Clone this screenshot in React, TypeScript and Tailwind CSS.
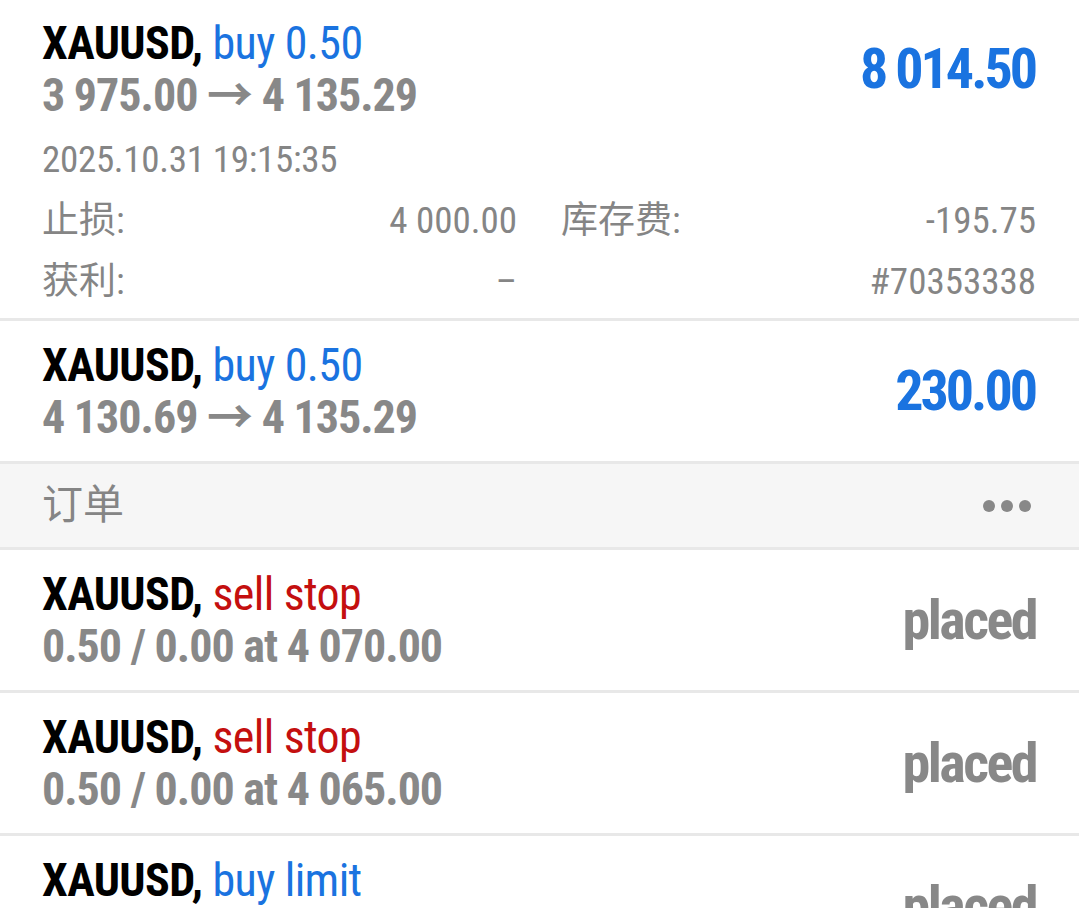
const FONT = "font-['Roboto_Condensed',Roboto,'Noto_Sans_CJK_SC',sans-serif] [font-stretch:condensed]"

type Side = 'buy' | 'sell'

function Title({ type, side }: { type: string; side: Side }) {
  return (
    <div className="text-[46px] leading-[52px] tracking-[-0.6px] whitespace-nowrap">
      <span className="font-bold text-black">XAUUSD,</span>{' '}
      <span className={side === 'buy' ? 'text-[#1a73e0]' : 'text-[#c40f0f]'}>{type}</span>
    </div>
  )
}

function SubLine({ children }: { children: React.ReactNode }) {
  return (
    <div className="text-[46px] font-bold leading-[52px] tracking-[-1px] text-[#888888] whitespace-nowrap">
      {children}
    </div>
  )
}

function Position({ open, close, profit }: { open: string; close: string; profit: string }) {
  return (
    <div className="flex h-[143px] items-center justify-between border-b-[3px] border-[#e8e8e8] pl-[42px] pr-[43px]">
      <div>
        <Title type="buy 0.50" side="buy" />
        <SubLine>
          {open} → {close}
        </SubLine>
      </div>
      <div className="mr-[1px] text-[56px] font-bold tracking-[-3px] text-[#1a73e0]">{profit}</div>
    </div>
  )
}

function Order({ type, side, line }: { type: string; side: Side; line: string }) {
  return (
    <div className="flex h-[143px] items-center justify-between border-b-[3px] border-[#e8e8e8] pl-[42px] pr-[43px]">
      <div>
        <Title type={type} side={side} />
        <SubLine>{line}</SubLine>
      </div>
      <div className="text-[56px] font-bold tracking-[-2.5px] text-[#888888]">placed</div>
    </div>
  )
}

export default function App() {
  return (
    <div className={`h-[908px] w-full overflow-hidden bg-white ${FONT}`}>
      {/* expanded position */}
      <div className="border-b-[3px] border-[#e8e8e8] pl-[42px] pr-[43px] pt-[17px]">
        <div className="flex items-center justify-between">
          <div>
            <Title type="buy 0.50" side="buy" />
            <SubLine>3 975.00 → 4 135.29</SubLine>
          </div>
          <div className="mr-[1px] text-[56px] font-bold tracking-[-3px] text-[#1a73e0]">8 014.50</div>
        </div>
        <div className="mt-2 pb-[6px] text-[37px] leading-[61px] text-[#858585]">
          <div className="tracking-[-0.3px]">2025.10.31 19:15:35</div>
          <div className="grid grid-cols-2 gap-x-[44px]">
            <div className="flex justify-between">
              <span>止损:</span>
              <span>4 000.00</span>
            </div>
            <div className="flex justify-between">
              <span>库存费:</span>
              <span>-195.75</span>
            </div>
            <div className="flex justify-between">
              <span>获利:</span>
              <span>–</span>
            </div>
            <div className="flex justify-end">
              <span>#70353338</span>
            </div>
          </div>
        </div>
      </div>

      <Position open="4 130.69" close="4 135.29" profit="230.00" />

      {/* section header */}
      <div className="flex h-[86px] items-center justify-between border-b-[3px] border-[#e8e8e8] bg-[#f6f6f6] pl-[42px] pr-[48px]">
        <span className="text-[41px] text-[#858585]">订单</span>
        <div className="flex gap-[6px]">
          <span className="h-[12px] w-[12px] rounded-full bg-[#888888]" />
          <span className="h-[12px] w-[12px] rounded-full bg-[#888888]" />
          <span className="h-[12px] w-[12px] rounded-full bg-[#888888]" />
        </div>
      </div>

      <Order type="sell stop" side="sell" line="0.50 / 0.00 at 4 070.00" />
      <Order type="sell stop" side="sell" line="0.50 / 0.00 at 4 065.00" />
      <Order type="buy limit" side="buy" line="0.50 / 0.00 at 4 060.00" />
    </div>
  )
}
